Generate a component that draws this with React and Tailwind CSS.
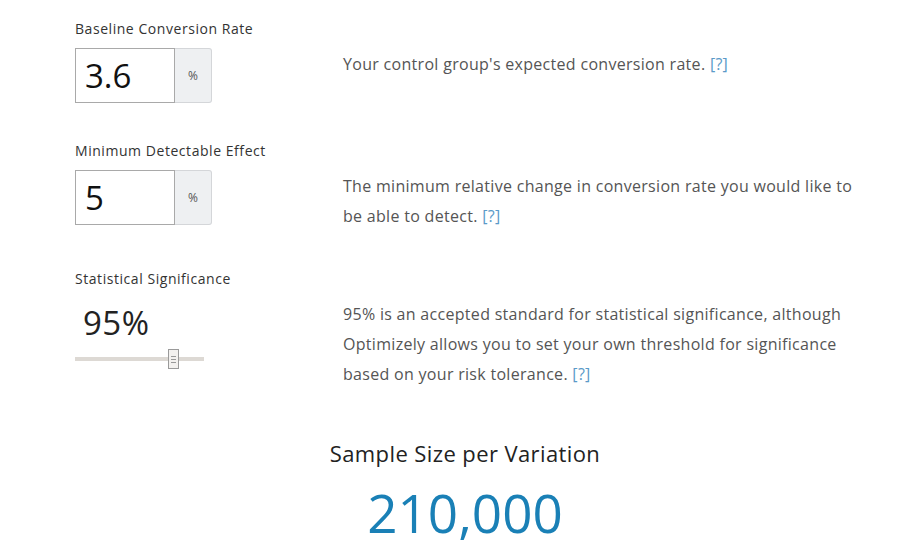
import React from "react";

const font = { fontFamily: '"Open Sans", "Liberation Sans", sans-serif' };

function Label({ children }) {
  return <div className="h-[20px] text-[14px] leading-[20px] tracking-[0.55px] text-[#333]">{children}</div>;
}

function PercentInput({ value }) {
  return (
    <div className="mt-[9px] flex h-[55px] w-[137px]">
      <div className="flex w-[100px] items-center border border-[#a9a9a9] bg-white pl-[9px] text-[33px] text-[#111]">
        {value}
      </div>
      <div className="flex w-[37px] items-center justify-center rounded-r-[3px] border border-l-0 border-[#d4d6d9] bg-[#eef0f2] text-[12px] text-[#555]">
        %
      </div>
    </div>
  );
}

function Desc({ children }) {
  return (
    <div className="pt-[30px] text-[16px] leading-[30px] tracking-[0.3px] text-[#555]">{children}</div>
  );
}

function Help() {
  return <span className="inline-block whitespace-nowrap text-[#5a9ac8]">[?]</span>;
}

export default function App() {
  return (
    <div className="min-h-[551px] w-[917px] bg-white" style={font}>
      <div className="ml-[75px] w-[780px] pt-[19px]">
        <div className="flex flex-col gap-[38px]">
          <div className="flex items-start">
            <div className="w-[268px] shrink-0">
              <Label>Baseline Conversion Rate</Label>
              <PercentInput value="3.6" />
            </div>
            <Desc>
              Your control group's expected conversion rate. <Help />
            </Desc>
          </div>
          <div className="flex items-start">
            <div className="w-[268px] shrink-0">
              <Label>Minimum Detectable Effect</Label>
              <PercentInput value="5" />
            </div>
            <Desc>
              <div className="w-[515px]">
                The minimum relative change in conversion rate you would like to be able to detect. <Help />
              </div>
            </Desc>
          </div>
          <div className="flex items-start">
            <div className="w-[268px] shrink-0">
              <Label>Statistical Significance</Label>
              <div className="mt-[14px] pl-[8px] text-[33px] leading-[40px] tracking-[0.5px] text-[#222]">95%</div>
              <div className="relative mt-[6px] h-[20px] w-[129px]">
                <div className="absolute left-0 right-0 top-[8px] h-[4px] bg-[#ddd9d4]" />
                <div className="absolute left-[93px] top-0 flex h-[20px] w-[11px] flex-col items-center justify-center gap-[2px] border border-[#9a9a9a] bg-[#f3f1ef]">
                  <div className="h-px w-[5px] bg-[#999]" />
                  <div className="h-px w-[5px] bg-[#999]" />
                  <div className="h-px w-[5px] bg-[#999]" />
                </div>
              </div>
            </div>
            <Desc>
              <div className="w-[505px]">
                95% is an accepted standard for statistical significance, although Optimizely allows you to set your own threshold for significance based on your risk tolerance. <Help />
              </div>
            </Desc>
          </div>
        </div>
        <div className="mt-[49px] text-center text-[22px] leading-[30px] tracking-[0.4px] text-[#222]">
          Sample Size per Variation
        </div>
        <div className="mt-[15px] text-center text-[53px] leading-[60px] text-[#1a80b6]">
          210,000
        </div>
      </div>
    </div>
  );
}
